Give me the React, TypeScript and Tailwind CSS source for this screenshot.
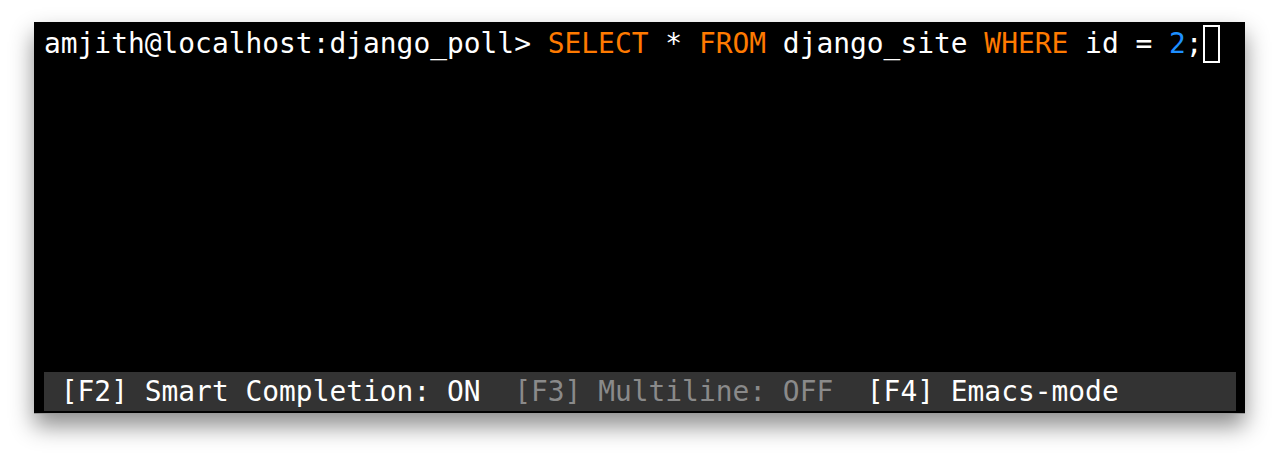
const mono = { fontFamily: '"DejaVu Sans Mono", "Liberation Mono", monospace' }

const Kw = ({ children }: { children: React.ReactNode }) => (
  <span className="text-[#ff7a00]">{children}</span>
)

export default function App() {
  return (
    <div className="w-full h-[463px] bg-white pt-[22px] pl-[34px]">
      {/* Terminal window */}
      <div
        className="w-[1211px] h-[392px] bg-black flex flex-col border-b border-[#9a9a9a] shadow-[0_12px_22px_rgba(0,0,0,0.45)]"
        style={mono}
      >
        <div className="pl-[10px] pt-[3px] text-[27.9px] leading-[38px] text-white whitespace-pre flex items-center">
          <span>amjith@localhost:django_poll&gt; </span>
          <Kw>SELECT</Kw>
          <span> * </span>
          <Kw>FROM</Kw>
          <span> django_site </span>
          <Kw>WHERE</Kw>
          <span> id = </span>
          <span className="text-[#1e8fff]">2</span>
          <span>;</span>
          <span className="inline-block w-[17px] h-[38px] border-2 border-white" />
        </div>

        <div className="flex-1" />

        {/* Status toolbar */}
        <div className="ml-[10px] mr-[9px] mb-[2px] h-[39px] bg-[#333333] flex items-center text-[27.9px] leading-[39px] whitespace-pre">
          <span className="text-white"> [F2] Smart Completion: ON  </span>
          <span className="text-[#8a8a8a]">[F3] Multiline: OFF  </span>
          <span className="text-white">[F4] Emacs-mode</span>
        </div>
      </div>
    </div>
  )
}
